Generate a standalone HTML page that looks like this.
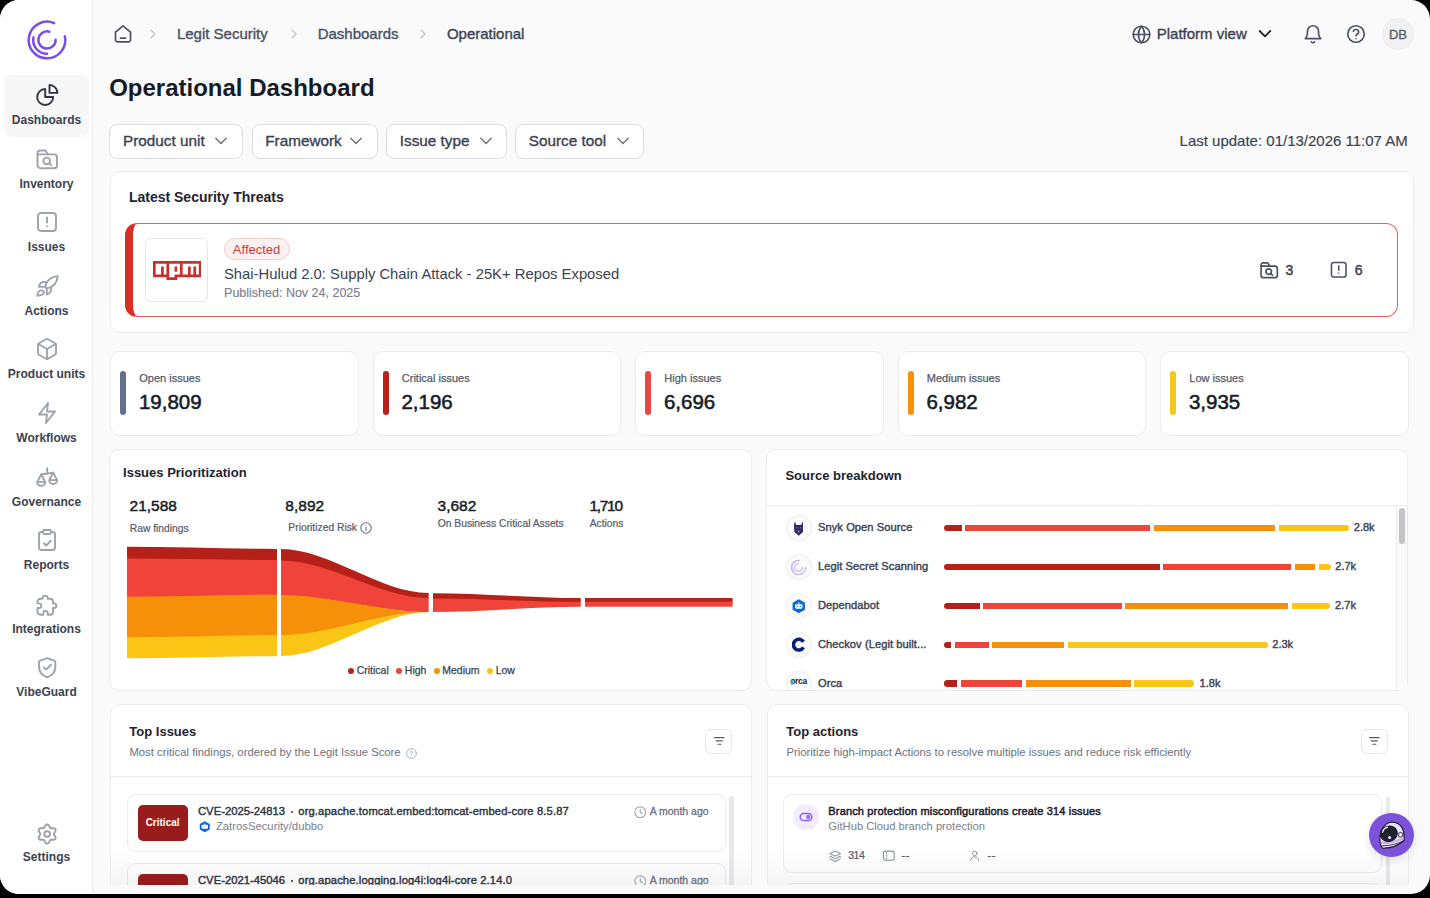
<!DOCTYPE html><html><head><meta charset="utf-8"><style>
*{box-sizing:border-box;margin:0;padding:0}
html,body{width:1430px;height:898px;overflow:hidden;background:#000;font-family:"Liberation Sans",sans-serif;color:#1f2330}
#app{position:absolute;left:0;top:0;width:1430px;height:894px;background:#fafafa;border-radius:19px;overflow:hidden}
.ab{position:absolute}
.t{position:absolute;white-space:nowrap;line-height:1}
.card{position:absolute;background:#fff;border:1px solid #ececef;border-radius:10px}
</style></head><body><div id="app">
<div class="ab" style="left:0.00px;top:0.00px;width:93.00px;height:894.00px;background:#fff;border-right:1px solid #ededf0"></div>
<svg class="ab" style="left:24.70px;top:17.50px" width="44" height="44" viewBox="-22 -22 44 44" fill="none" stroke="#7a4fe8" stroke-width="2.5" stroke-linecap="round" stroke-linejoin="round"><path d="M7.15 -16.85A18.3 18.3 0 1 0 17.90 -3.80"/><path d="M-13.55 -2.63A13.8 13.8 0 0 0 0.00 13.80"/><path d="M2.37 -8.27A8.6 8.6 0 1 0 8.59 -0.30"/></svg>
<div class="ab" style="left:4.00px;top:75.30px;width:85.00px;height:61.70px;background:#f7f7f8;border-radius:8px"></div>
<svg class="ab" style="left:34.50px;top:83.00px" width="24" height="24" viewBox="0 0 24 24" fill="none" stroke="#2f3542" stroke-width="1.9" stroke-linecap="round" stroke-linejoin="round"><path d="M10.2 6A8 8 0 1 0 18.2 14H10.2Z"/><path d="M14.5 2A7.9 7.9 0 0 1 22.4 9.9H14.5Z"/></svg>
<div class="t" style="left:-253.50px;width:600px;text-align:center;top:114.04px;font-size:12px;font-weight:bold;color:#3b4252;">Dashboards</div>
<svg class="ab" style="left:34.50px;top:146.60px" width="24" height="24" viewBox="0 0 24 24" fill="none" stroke="#9da2ac" stroke-width="1.9" stroke-linecap="round" stroke-linejoin="round"><path d="M2.5 7.35V6A2.5 2.5 0 0 1 5 3.5H10.5L12.9 7.35H19A3 3 0 0 1 22 10.35V18.2A3 3 0 0 1 19 21.2H5.5A3 3 0 0 1 2.5 18.2Z"/><path d="M2.5 7.35H12.9"/><circle cx="11.7" cy="13.9" r="3.3"/><path d="M14.2 16.3l2 1.8"/></svg>
<div class="t" style="left:-253.50px;width:600px;text-align:center;top:177.64px;font-size:12px;font-weight:bold;color:#3b4252;">Inventory</div>
<svg class="ab" style="left:34.50px;top:210.20px" width="24" height="24" viewBox="0 0 24 24" fill="none" stroke="#9da2ac" stroke-width="1.9" stroke-linecap="round" stroke-linejoin="round"><rect x="3" y="3" width="18" height="18" rx="3"/><path d="M12 7.5v5"/><path d="M12 16.2h.01"/></svg>
<div class="t" style="left:-253.50px;width:600px;text-align:center;top:241.24px;font-size:12px;font-weight:bold;color:#3b4252;">Issues</div>
<svg class="ab" style="left:34.50px;top:273.80px" width="24" height="24" viewBox="0 0 24 24" fill="none" stroke="#9da2ac" stroke-width="1.9" stroke-linecap="round" stroke-linejoin="round"><path d="M11 14.2C9.3 9.5 14.5 2.6 22.6 2.1 22.4 9.8 16 14.6 11 14.2Z"/><path d="M10.6 8.2C7 7.3 4.6 9.2 3.9 12.7H9.4"/><path d="M15.9 12.9C16.9 16.6 15 19.9 11.8 20.6V15.2"/><path d="M2.3 21.8C2.5 18.6 4 16.6 6.4 16.4A2.2 2.2 0 0 1 8.9 18.6C8.4 20.6 5.6 21.7 2.3 21.8Z"/></svg>
<div class="t" style="left:-253.50px;width:600px;text-align:center;top:304.84px;font-size:12px;font-weight:bold;color:#3b4252;">Actions</div>
<svg class="ab" style="left:34.50px;top:337.40px" width="24" height="24" viewBox="0 0 24 24" fill="none" stroke="#9da2ac" stroke-width="1.9" stroke-linecap="round" stroke-linejoin="round"><path d="M21 8a2 2 0 0 0-1-1.73l-7-4a2 2 0 0 0-2 0l-7 4A2 2 0 0 0 3 8v8a2 2 0 0 0 1 1.73l7 4a2 2 0 0 0 2 0l7-4A2 2 0 0 0 21 16Z"/><path d="m3.3 7 8.7 5 8.7-5"/><path d="M12 22V12"/></svg>
<div class="t" style="left:-253.50px;width:600px;text-align:center;top:368.44px;font-size:12px;font-weight:bold;color:#3b4252;">Product units</div>
<svg class="ab" style="left:34.50px;top:401.00px" width="24" height="24" viewBox="0 0 24 24" fill="none" stroke="#9da2ac" stroke-width="1.9" stroke-linecap="round" stroke-linejoin="round"><path d="M13 2 4 13.5h8L11 22l9-11.5h-8Z"/></svg>
<div class="t" style="left:-253.50px;width:600px;text-align:center;top:432.04px;font-size:12px;font-weight:bold;color:#3b4252;">Workflows</div>
<svg class="ab" style="left:34.50px;top:464.60px" width="24" height="24" viewBox="0 0 24 24" fill="none" stroke="#9da2ac" stroke-width="1.9" stroke-linecap="round" stroke-linejoin="round"><path d="M12.2 3.3V8.6"/><path d="M6.2 9.5 18.2 7.7"/><path d="M2.2 16.9 6.2 9.5 10.2 16.9A4 4 0 0 1 2.2 16.9ZM2.2 16.9H10.2"/><path d="M14.2 15.1 18.2 7.7 22.2 15.1A4 4 0 0 1 14.2 15.1ZM14.2 15.1H22.2"/></svg>
<div class="t" style="left:-253.50px;width:600px;text-align:center;top:495.64px;font-size:12px;font-weight:bold;color:#3b4252;">Governance</div>
<svg class="ab" style="left:34.50px;top:528.20px" width="24" height="24" viewBox="0 0 24 24" fill="none" stroke="#9da2ac" stroke-width="1.9" stroke-linecap="round" stroke-linejoin="round"><path d="M16 4h1.5A2.5 2.5 0 0 1 20 6.5v13a2.5 2.5 0 0 1-2.5 2.5h-11A2.5 2.5 0 0 1 4 19.5v-13A2.5 2.5 0 0 1 6.5 4H8"/><rect x="8" y="2" width="8" height="4" rx="1.5"/><path d="M8.9 15.3 11.2 17.5 16 12.7"/></svg>
<div class="t" style="left:-253.50px;width:600px;text-align:center;top:559.24px;font-size:12px;font-weight:bold;color:#3b4252;">Reports</div>
<svg class="ab" style="left:34.50px;top:591.80px" width="24" height="24" viewBox="0 0 24 24" fill="none" stroke="#9da2ac" stroke-width="1.9" stroke-linecap="round" stroke-linejoin="round"><path d="M5.5 6.7H7.6V6.2A2.55 2.55 0 0 1 12.7 6.2V6.7H15A3 3 0 0 1 18 9.7V11.4H19A2.3 2.3 0 0 1 19 16H18V19.7A3 3 0 0 1 15 22.7H12.7V21.3A2.25 2.25 0 0 0 8.2 21.3V22.7H5.5A3 3 0 0 1 2.5 19.7V16H3.9A2.3 2.3 0 0 0 3.9 11.4H2.5V9.7A3 3 0 0 1 5.5 6.7Z"/></svg>
<div class="t" style="left:-253.50px;width:600px;text-align:center;top:622.84px;font-size:12px;font-weight:bold;color:#3b4252;">Integrations</div>
<svg class="ab" style="left:34.50px;top:655.40px" width="24" height="24" viewBox="0 0 24 24" fill="none" stroke="#9da2ac" stroke-width="1.9" stroke-linecap="round" stroke-linejoin="round"><path d="M12.2 3.2 4.6 5.8A.8.8 0 0 0 4.1 6.6V12.5C4.1 17.3 7.6 20.5 12.2 22.4 16.8 20.5 20.3 17.3 20.3 12.5V6.6A.8.8 0 0 0 19.8 5.8Z"/><path d="M8.9 12.4 11 14.6 16 9.7"/></svg>
<div class="t" style="left:-253.50px;width:600px;text-align:center;top:686.44px;font-size:12px;font-weight:bold;color:#3b4252;">VibeGuard</div>
<svg class="ab" style="left:34.50px;top:822.00px" width="24" height="24" viewBox="0 0 24 24" fill="none" stroke="#9da2ac" stroke-width="1.9" stroke-linecap="round" stroke-linejoin="round"><path d="M18.90 12.00 L18.99 12.45 L19.25 12.94 L19.62 13.50 L20.02 14.12 L20.37 14.81 L20.59 15.52 L20.61 16.20 L20.41 16.80 L19.99 17.27 L19.39 17.59 L18.67 17.76 L17.90 17.80 L17.15 17.76 L16.49 17.72 L15.94 17.74 L15.50 17.89 L15.15 18.19 L14.86 18.66 L14.56 19.26 L14.22 19.92 L13.80 20.57 L13.30 21.11 L12.72 21.47 L12.10 21.60 L11.48 21.47 L10.90 21.11 L10.40 20.57 L9.98 19.92 L9.64 19.26 L9.34 18.66 L9.05 18.19 L8.70 17.89 L8.26 17.74 L7.71 17.72 L7.05 17.76 L6.30 17.80 L5.53 17.76 L4.81 17.59 L4.21 17.27 L3.79 16.80 L3.59 16.20 L3.61 15.52 L3.83 14.81 L4.18 14.12 L4.58 13.50 L4.95 12.94 L5.21 12.45 L5.30 12.00 L5.21 11.55 L4.95 11.06 L4.58 10.50 L4.18 9.88 L3.83 9.19 L3.61 8.48 L3.59 7.80 L3.79 7.20 L4.21 6.73 L4.81 6.41 L5.53 6.24 L6.30 6.20 L7.05 6.24 L7.71 6.28 L8.26 6.26 L8.70 6.11 L9.05 5.81 L9.34 5.34 L9.64 4.74 L9.98 4.08 L10.40 3.43 L10.90 2.89 L11.48 2.53 L12.10 2.40 L12.72 2.53 L13.30 2.89 L13.80 3.43 L14.22 4.08 L14.56 4.74 L14.86 5.34 L15.15 5.81 L15.50 6.11 L15.94 6.26 L16.49 6.28 L17.15 6.24 L17.90 6.20 L18.67 6.24 L19.39 6.41 L19.99 6.73 L20.41 7.20 L20.61 7.80 L20.59 8.48 L20.37 9.19 L20.02 9.88 L19.62 10.50 L19.25 11.06 L18.99 11.55Z"/><circle cx="12.1" cy="12" r="2.8"/></svg>
<div class="t" style="left:-253.50px;width:600px;text-align:center;top:851.44px;font-size:12px;font-weight:bold;color:#3b4252;">Settings</div>
<svg class="ab" style="left:113.00px;top:24.00px" width="20" height="19" viewBox="0 0 20 19" fill="none" stroke="#4a5162" stroke-width="1.7" stroke-linecap="round" stroke-linejoin="round"><path d="M2.5 8.2 10 1.8l7.5 6.4V16a1.8 1.8 0 0 1-1.8 1.8H4.3A1.8 1.8 0 0 1 2.5 16Z"/><path d="M7.5 14.2h5"/></svg>
<svg class="ab" style="left:149.30px;top:29.00px" width="8" height="10" viewBox="0 0 8 10" fill="none" stroke="#c4c7ce" stroke-width="1.3" stroke-linecap="round" stroke-linejoin="round"><path d="M2 1l4 4-4 4"/></svg>
<svg class="ab" style="left:289.70px;top:29.00px" width="8" height="10" viewBox="0 0 8 10" fill="none" stroke="#c4c7ce" stroke-width="1.3" stroke-linecap="round" stroke-linejoin="round"><path d="M2 1l4 4-4 4"/></svg>
<svg class="ab" style="left:419.00px;top:29.00px" width="8" height="10" viewBox="0 0 8 10" fill="none" stroke="#c4c7ce" stroke-width="1.3" stroke-linecap="round" stroke-linejoin="round"><path d="M2 1l4 4-4 4"/></svg>
<div class="t" style="left:176.88px;top:26.20px;font-size:15px;-webkit-text-stroke:0.35px #4a5162;color:#4a5162;">Legit Security</div>
<div class="t" style="left:317.68px;top:26.20px;font-size:15px;-webkit-text-stroke:0.35px #4a5162;color:#4a5162;">Dashboards</div>
<div class="t" style="left:446.88px;top:26.20px;font-size:15px;-webkit-text-stroke:0.35px #3b4252;color:#3b4252;">Operational</div>
<svg class="ab" style="left:1130.50px;top:23.50px" width="21" height="21" viewBox="0 0 24 24" fill="none" stroke="#4a5162" stroke-width="1.8" stroke-linecap="round" stroke-linejoin="round"><circle cx="12" cy="12" r="9.5"/><path d="M2.5 12h19"/><path d="M12 2.5a14.5 14.5 0 0 1 0 19 14.5 14.5 0 0 1 0-19Z"/></svg>
<div class="t" style="left:1156.77px;top:26.40px;font-size:15px;-webkit-text-stroke:0.35px #3b4252;color:#3b4252;">Platform view</div>
<svg class="ab" style="left:1257.00px;top:26.00px" width="16" height="16" viewBox="0 0 16 16" fill="none" stroke="#1f2330" stroke-width="1.8" stroke-linecap="round" stroke-linejoin="round"><path d="M2.7 5l5.3 5.3L13.3 5"/></svg>
<svg class="ab" style="left:1301.80px;top:23.00px" width="22" height="22" viewBox="0 0 24 24" fill="none" stroke="#4a5162" stroke-width="1.8" stroke-linecap="round" stroke-linejoin="round"><path d="M6 9a6 6 0 0 1 12 0c0 6 2.5 8 2.5 8h-17S6 15 6 9Z"/><path d="M10.3 20.5a1.9 1.9 0 0 0 3.4 0"/></svg>
<svg class="ab" style="left:1345.30px;top:22.70px" width="22" height="22" viewBox="0 0 24 24" fill="none" stroke="#4a5162" stroke-width="1.8" stroke-linecap="round" stroke-linejoin="round"><circle cx="12" cy="12" r="9"/><path d="M9.1 9a3 3 0 0 1 5.8 1c0 2-3 2.5-3 4"/><path d="M12 17.2h.01"/></svg>
<div class="ab" style="left:1382.20px;top:18.10px;width:31.50px;height:31.50px;border-radius:50%;background:#f2f2f4;border:1px solid #ececef"></div>
<div class="t" style="left:1098.00px;width:600px;text-align:center;top:27.70px;font-size:13px;-webkit-text-stroke:0.3px #555b69;color:#555b69;">DB</div>
<div class="t" style="left:109.16px;top:75.88px;font-size:24px;font-weight:bold;color:#161b26;">Operational Dashboard</div>
<div class="ab" style="left:109.30px;top:123.50px;width:133.40px;height:35.20px;background:#fff;border:1px solid #dcdde2;border-radius:8px"></div>
<div class="t" style="left:123.06px;top:132.85px;font-size:15.3px;-webkit-text-stroke:0.35px #3b4252;color:#3b4252;">Product unit</div>
<svg class="ab" style="left:215.20px;top:133.50px" width="12" height="12" viewBox="0 0 12 12" fill="none" stroke="#6b7180" stroke-width="1.4" stroke-linecap="round" stroke-linejoin="round"><path d="M0.8 4.2l5.2 5.2 5.2-5.2"/></svg>
<div class="ab" style="left:251.50px;top:123.50px;width:126.10px;height:35.20px;background:#fff;border:1px solid #dcdde2;border-radius:8px"></div>
<div class="t" style="left:265.26px;top:132.85px;font-size:15.3px;-webkit-text-stroke:0.35px #3b4252;color:#3b4252;">Framework</div>
<svg class="ab" style="left:350.10px;top:133.50px" width="12" height="12" viewBox="0 0 12 12" fill="none" stroke="#6b7180" stroke-width="1.4" stroke-linecap="round" stroke-linejoin="round"><path d="M0.8 4.2l5.2 5.2 5.2-5.2"/></svg>
<div class="ab" style="left:386.00px;top:123.50px;width:121.00px;height:35.20px;background:#fff;border:1px solid #dcdde2;border-radius:8px"></div>
<div class="t" style="left:399.76px;top:132.85px;font-size:15.3px;-webkit-text-stroke:0.35px #3b4252;color:#3b4252;">Issue type</div>
<svg class="ab" style="left:479.50px;top:133.50px" width="12" height="12" viewBox="0 0 12 12" fill="none" stroke="#6b7180" stroke-width="1.4" stroke-linecap="round" stroke-linejoin="round"><path d="M0.8 4.2l5.2 5.2 5.2-5.2"/></svg>
<div class="ab" style="left:515.00px;top:123.50px;width:129.00px;height:35.20px;background:#fff;border:1px solid #dcdde2;border-radius:8px"></div>
<div class="t" style="left:528.76px;top:132.85px;font-size:15.3px;-webkit-text-stroke:0.35px #3b4252;color:#3b4252;">Source tool</div>
<svg class="ab" style="left:616.50px;top:133.50px" width="12" height="12" viewBox="0 0 12 12" fill="none" stroke="#6b7180" stroke-width="1.4" stroke-linecap="round" stroke-linejoin="round"><path d="M0.8 4.2l5.2 5.2 5.2-5.2"/></svg>
<div class="t" style="right:22.20px;top:133.30px;font-size:15px;-webkit-text-stroke:0.15px #3b4252;color:#3b4252;">Last update: 01/13/2026 11:07 AM</div>
<div class="card" style="left:110px;top:171px;width:1303.5px;height:162px"></div>
<div class="t" style="left:128.91px;top:190.15px;font-size:14px;font-weight:bold;color:#1f2330;">Latest Security Threats</div>
<div class="ab" style="left:125.20px;top:222.50px;width:1272.50px;height:94.50px;border:1.4px solid #e55f5f;border-left:8.2px solid #d92d25;border-radius:12px;background:#fff"></div>
<div class="ab" style="left:145.20px;top:238.30px;width:63.30px;height:63.40px;border:1px solid #e6e7ea;border-radius:6px"></div>
<svg class="ab" style="left:152.90px;top:260.80px" width="48.5" height="19" viewBox="0 0 18 7" preserveAspectRatio="none"><path fill="#c9302c" d="M0 0h18v6H9v1H5V6H0Z"/><path fill="#fff" d="M1 5h2V2h1v3h1V1H1Z M6 1v5h2V5h2V1Z M8 2h1v2H8Z M11 1v4h2V2h1v3h1V2h1v3h1V1Z"/></svg>
<div class="ab" style="left:224.30px;top:238.30px;width:65.70px;height:21.40px;border:1px solid #f7caca;background:#fdf0f0;border-radius:11px"></div>
<div class="t" style="left:232.84px;top:242.80px;font-size:13px;color:#cf3a3a;">Affected</div>
<div class="t" style="left:223.98px;top:266.67px;font-size:14.8px;color:#3b4252;">Shai-Hulud 2.0: Supply Chain Attack - 25K+ Repos Exposed</div>
<div class="t" style="left:224.06px;top:287.22px;font-size:12.5px;-webkit-text-stroke:0.15px #7a8090;color:#7a8090;">Published: Nov 24, 2025</div>
<svg class="ab" style="left:1258.70px;top:260.00px" width="20" height="20" viewBox="0 0 24 24" fill="none" stroke="#4a5162" stroke-width="2" stroke-linecap="round" stroke-linejoin="round"><path d="M2.5 7.35V6A2.5 2.5 0 0 1 5 3.5H10.5L12.9 7.35H19A3 3 0 0 1 22 10.35V18.2A3 3 0 0 1 19 21.2H5.5A3 3 0 0 1 2.5 18.2Z"/><path d="M2.5 7.35H12.9"/><circle cx="11.7" cy="13.9" r="3.3"/><path d="M14.2 16.3l2 1.8"/></svg>
<div class="t" style="left:1285.41px;top:262.95px;font-size:14px;-webkit-text-stroke:0.45px #3b4252;color:#3b4252;">3</div>
<svg class="ab" style="left:1329.00px;top:260.00px" width="19.5" height="19.5" viewBox="0 0 24 24" fill="none" stroke="#4a5162" stroke-width="1.9" stroke-linecap="round" stroke-linejoin="round"><rect x="3" y="3" width="18" height="18" rx="3"/><path d="M12 7.5v5"/><path d="M12 16.2h.01"/></svg>
<div class="t" style="left:1354.81px;top:262.95px;font-size:14px;-webkit-text-stroke:0.45px #3b4252;color:#3b4252;">6</div>
<div class="card" style="left:110.0px;top:351.4px;width:248.8px;height:84.2px"></div>
<div class="ab" style="left:120.00px;top:371.00px;width:6.00px;height:44.40px;background:#64708a;border-radius:3px"></div>
<div class="t" style="left:139.31px;top:373.49px;font-size:11px;-webkit-text-stroke:0.25px #555b69;color:#555b69;">Open issues</div>
<div class="t" style="left:138.98px;top:392.45px;font-size:20.5px;-webkit-text-stroke:0.55px #161b26;color:#161b26;">19,809</div>
<div class="card" style="left:372.5px;top:351.4px;width:248.8px;height:84.2px"></div>
<div class="ab" style="left:382.50px;top:371.00px;width:6.00px;height:44.40px;background:#b9201a;border-radius:3px"></div>
<div class="t" style="left:401.81px;top:373.49px;font-size:11px;-webkit-text-stroke:0.25px #555b69;color:#555b69;">Critical issues</div>
<div class="t" style="left:401.48px;top:392.45px;font-size:20.5px;-webkit-text-stroke:0.55px #161b26;color:#161b26;">2,196</div>
<div class="card" style="left:635.0px;top:351.4px;width:248.8px;height:84.2px"></div>
<div class="ab" style="left:645.00px;top:371.00px;width:6.00px;height:44.40px;background:#ef4444;border-radius:3px"></div>
<div class="t" style="left:664.32px;top:373.49px;font-size:11px;-webkit-text-stroke:0.25px #555b69;color:#555b69;">High issues</div>
<div class="t" style="left:663.98px;top:392.45px;font-size:20.5px;-webkit-text-stroke:0.55px #161b26;color:#161b26;">6,696</div>
<div class="card" style="left:897.5px;top:351.4px;width:248.8px;height:84.2px"></div>
<div class="ab" style="left:907.50px;top:371.00px;width:6.00px;height:44.40px;background:#f7900a;border-radius:3px"></div>
<div class="t" style="left:926.82px;top:373.49px;font-size:11px;-webkit-text-stroke:0.25px #555b69;color:#555b69;">Medium issues</div>
<div class="t" style="left:926.48px;top:392.45px;font-size:20.5px;-webkit-text-stroke:0.55px #161b26;color:#161b26;">6,982</div>
<div class="card" style="left:1160.0px;top:351.4px;width:248.8px;height:84.2px"></div>
<div class="ab" style="left:1170.00px;top:371.00px;width:6.00px;height:44.40px;background:#fac515;border-radius:3px"></div>
<div class="t" style="left:1189.32px;top:373.49px;font-size:11px;-webkit-text-stroke:0.25px #555b69;color:#555b69;">Low issues</div>
<div class="t" style="left:1188.98px;top:392.45px;font-size:20.5px;-webkit-text-stroke:0.55px #161b26;color:#161b26;">3,935</div>
<div class="card" style="left:109.4px;top:449.3px;width:643.1px;height:241.5px"></div>
<svg class="ab" style="left:0;top:0" width="760" height="700" viewBox="0 0 760 700"><path fill="#b52119" d="M127 546.7C176.50 546.7 227.50 548.9 277 548.9L277 560.9C227.50 560.9 176.50 559.4 127 559.4Z"/><path fill="#f0443a" d="M127 558.5C176.50 558.5 227.50 560 277 560L277 595.6C227.50 595.6 176.50 597.6999999999999 127 597.6999999999999Z"/><path fill="#f79009" d="M127 596.8C176.50 596.8 227.50 594.7 277 594.7L277 636.0C227.50 636.0 176.50 638.1 127 638.1Z"/><path fill="#fac515" d="M127 637.2C176.50 637.2 227.50 635.1 277 635.1L277 656.2C227.50 656.2 176.50 658.3 127 658.3Z"/><path fill="#b52119" d="M281 549C329.74 549 379.96 593 428.7 593L428.7 598.9C379.96 598.9 329.74 561.4 281 561.4Z"/><path fill="#f0443a" d="M281 560.5C329.74 560.5 379.96 598 428.7 598L428.7 612C379.96 612 329.74 595.9 281 595.9Z"/><path fill="#f79009" d="M281 595C329.74 595 379.96 612 428.7 612L428.7 612C379.96 612 329.74 635.9 281 635.9Z"/><path fill="#fac515" d="M281 635C329.74 635 379.96 612 428.7 612L428.7 612C379.96 612 329.74 656 281 656Z"/><path fill="#b52119" d="M433 593.3C481.74 593.3 531.96 598.1 580.7 598.1L580.7 602.6999999999999C531.96 602.6999999999999 481.74 599.3 433 599.3Z"/><path fill="#f0443a" d="M433 598.4C481.74 598.4 531.96 601.8 580.7 601.8L580.7 606.8C531.96 606.8 481.74 612 433 612Z"/><path fill="#f79009" d="M433 611.9C481.74 611.9 531.96 606.8 580.7 606.8L580.7 606.8C531.96 606.8 481.74 612 433 612Z"/><path fill="#b52119" d="M585 598.1C633.71 598.1 683.89 598.1 732.6 598.1L732.6 602.6999999999999C683.89 602.6999999999999 633.71 602.6999999999999 585 602.6999999999999Z"/><path fill="#f0443a" d="M585 601.8C633.71 601.8 683.89 601.8 732.6 601.8L732.6 606.8C683.89 606.8 633.71 606.8 585 606.8Z"/></svg>
<div class="t" style="left:123.05px;top:466.10px;font-size:13px;font-weight:bold;color:#1f2330;">Issues Prioritization</div>
<div class="t" style="left:129.56px;top:498.48px;font-size:15.5px;-webkit-text-stroke:0.45px #161b26;color:#161b26;">21,588</div>
<div class="t" style="left:129.74px;top:524.08px;font-size:10.3px;-webkit-text-stroke:0.2px #555b69;color:#555b69;">Raw findings</div>
<div class="t" style="left:285.36px;top:498.48px;font-size:15.5px;-webkit-text-stroke:0.45px #161b26;color:#161b26;">8,892</div>
<div class="t" style="left:288.34px;top:522.78px;font-size:10.3px;-webkit-text-stroke:0.2px #555b69;color:#555b69;">Prioritized Risk</div>
<div class="t" style="left:437.56px;top:498.48px;font-size:15.5px;-webkit-text-stroke:0.45px #161b26;color:#161b26;">3,682</div>
<div class="t" style="left:437.74px;top:519.18px;font-size:10.3px;-webkit-text-stroke:0.2px #555b69;color:#555b69;">On Business Critical Assets</div>
<div class="t" style="left:589.46px;top:498.48px;font-size:15.5px;-webkit-text-stroke:0.45px #161b26;color:#161b26;letter-spacing:-1.3px">1,710</div>
<div class="t" style="left:589.64px;top:519.18px;font-size:10.3px;-webkit-text-stroke:0.2px #555b69;color:#555b69;">Actions</div>
<svg class="ab" style="left:360.00px;top:522.30px" width="12" height="12" viewBox="0 0 12 12" fill="none" stroke="#6b7180" stroke-width="1.1" stroke-linecap="round" stroke-linejoin="round"><circle cx="6" cy="6" r="5.2"/><path d="M6 5.4v3"/><path d="M6 3.5h.01"/></svg>
<div class="ab" style="left:347.60px;top:667.60px;width:6.40px;height:6.40px;border-radius:50%;background:#b52119"></div>
<div class="t" style="left:356.63px;top:665.41px;font-size:10.5px;-webkit-text-stroke:0.25px #3b4252;color:#3b4252;">Critical</div>
<div class="ab" style="left:395.80px;top:667.60px;width:6.40px;height:6.40px;border-radius:50%;background:#f0443a"></div>
<div class="t" style="left:404.83px;top:665.41px;font-size:10.5px;-webkit-text-stroke:0.25px #3b4252;color:#3b4252;">High</div>
<div class="ab" style="left:434.00px;top:667.60px;width:6.40px;height:6.40px;border-radius:50%;background:#f79009"></div>
<div class="t" style="left:442.23px;top:665.41px;font-size:10.5px;-webkit-text-stroke:0.25px #3b4252;color:#3b4252;">Medium</div>
<div class="ab" style="left:487.10px;top:667.60px;width:6.40px;height:6.40px;border-radius:50%;background:#fac515"></div>
<div class="t" style="left:495.63px;top:665.41px;font-size:10.5px;-webkit-text-stroke:0.25px #3b4252;color:#3b4252;">Low</div>
<div class="card" style="left:766.2px;top:449.3px;width:641.6px;height:241.5px"></div>
<div class="t" style="left:785.44px;top:469.30px;font-size:13px;font-weight:bold;color:#1f2330;">Source breakdown</div>
<div class="ab" style="left:767.20px;top:505.00px;width:639.60px;height:1.00px;background:#ededf0"></div>
<div class="ab" style="left:1396.00px;top:506.00px;width:11.00px;height:184.00px;background:#fafafa;border-left:1px solid #ededf0"></div>
<div class="ab" style="left:1398.80px;top:508.00px;width:6.50px;height:36.40px;border-radius:4px;background:#c4c4c6"></div>
<div class="ab" style="left:767px;top:506px;width:629px;height:184px;overflow:hidden"><div class="ab" style="left:-767px;top:-506px;width:1430px;height:898px">
<div class="ab" style="left:785.90px;top:515.15px;width:25.70px;height:25.70px;border-radius:50%;border:1px solid #ececef;background:#fbfbfc"></div>
<div class="t" style="left:818.01px;top:522.20px;font-size:11.1px;-webkit-text-stroke:0.4px #3b4252;color:#3b4252;letter-spacing:0.08px">Snyk Open Source</div>
<div class="ab" style="left:944.00px;top:524.85px;width:18.00px;height:6.30px;background:#b52119;border-radius:3.2px 0 0 3.2px"></div>
<div class="ab" style="left:965.10px;top:524.85px;width:185.10px;height:6.30px;background:#f0443a;border-radius:0 0 0 0"></div>
<div class="ab" style="left:1153.60px;top:524.85px;width:121.90px;height:6.30px;background:#f79009;border-radius:0 0 0 0"></div>
<div class="ab" style="left:1278.90px;top:524.85px;width:70.20px;height:6.30px;background:#fac515;border-radius:0 3.2px 3.2px 0"></div>
<div class="t" style="left:1353.82px;top:522.29px;font-size:11px;-webkit-text-stroke:0.4px #3b4252;color:#3b4252;">2.8k</div>
<div class="ab" style="left:785.90px;top:554.05px;width:25.70px;height:25.70px;border-radius:50%;border:1px solid #ececef;background:#fbfbfc"></div>
<div class="t" style="left:818.01px;top:561.10px;font-size:11.1px;-webkit-text-stroke:0.4px #3b4252;color:#3b4252;letter-spacing:0.08px">Legit Secret Scanning</div>
<div class="ab" style="left:944.00px;top:563.75px;width:215.90px;height:6.30px;background:#b52119;border-radius:3.2px 0 0 3.2px"></div>
<div class="ab" style="left:1163.30px;top:563.75px;width:127.80px;height:6.30px;background:#f0443a;border-radius:0 0 0 0"></div>
<div class="ab" style="left:1294.80px;top:563.75px;width:20.50px;height:6.30px;background:#f79009;border-radius:0 0 0 0"></div>
<div class="ab" style="left:1318.70px;top:563.75px;width:11.90px;height:6.30px;background:#fac515;border-radius:0 3.2px 3.2px 0"></div>
<div class="t" style="left:1335.32px;top:561.19px;font-size:11px;-webkit-text-stroke:0.4px #3b4252;color:#3b4252;">2.7k</div>
<div class="ab" style="left:785.90px;top:592.95px;width:25.70px;height:25.70px;border-radius:50%;border:1px solid #ececef;background:#fbfbfc"></div>
<div class="t" style="left:818.01px;top:600.00px;font-size:11.1px;-webkit-text-stroke:0.4px #3b4252;color:#3b4252;letter-spacing:0.08px">Dependabot</div>
<div class="ab" style="left:944.00px;top:602.65px;width:35.60px;height:6.30px;background:#b52119;border-radius:3.2px 0 0 3.2px"></div>
<div class="ab" style="left:983.30px;top:602.65px;width:138.50px;height:6.30px;background:#f0443a;border-radius:0 0 0 0"></div>
<div class="ab" style="left:1125.20px;top:602.65px;width:162.80px;height:6.30px;background:#f79009;border-radius:0 0 0 0"></div>
<div class="ab" style="left:1291.70px;top:602.65px;width:38.60px;height:6.30px;background:#fac515;border-radius:0 3.2px 3.2px 0"></div>
<div class="t" style="left:1335.12px;top:600.09px;font-size:11px;-webkit-text-stroke:0.4px #3b4252;color:#3b4252;">2.7k</div>
<div class="ab" style="left:785.90px;top:631.85px;width:25.70px;height:25.70px;border-radius:50%;border:1px solid #ececef;background:#fbfbfc"></div>
<div class="t" style="left:818.01px;top:638.90px;font-size:11.1px;-webkit-text-stroke:0.4px #3b4252;color:#3b4252;letter-spacing:0.08px">Checkov (Legit built...</div>
<div class="ab" style="left:944.00px;top:641.55px;width:6.90px;height:6.30px;background:#b52119;border-radius:3.2px 0 0 3.2px"></div>
<div class="ab" style="left:954.60px;top:641.55px;width:34.40px;height:6.30px;background:#f0443a;border-radius:0 0 0 0"></div>
<div class="ab" style="left:992.40px;top:641.55px;width:71.60px;height:6.30px;background:#f79009;border-radius:0 0 0 0"></div>
<div class="ab" style="left:1067.70px;top:641.55px;width:199.90px;height:6.30px;background:#fac515;border-radius:0 3.2px 3.2px 0"></div>
<div class="t" style="left:1272.32px;top:638.99px;font-size:11px;-webkit-text-stroke:0.4px #3b4252;color:#3b4252;">2.3k</div>
<div class="ab" style="left:785.90px;top:670.75px;width:25.70px;height:25.70px;border-radius:50%;border:1px solid #ececef;background:#fbfbfc"></div>
<div class="t" style="left:818.01px;top:677.80px;font-size:11.1px;-webkit-text-stroke:0.4px #3b4252;color:#3b4252;letter-spacing:0.08px">Orca</div>
<div class="ab" style="left:944.00px;top:680.45px;width:12.90px;height:6.30px;background:#b52119;border-radius:3.2px 0 0 3.2px"></div>
<div class="ab" style="left:960.60px;top:680.45px;width:61.30px;height:6.30px;background:#f0443a;border-radius:0 0 0 0"></div>
<div class="ab" style="left:1025.60px;top:680.45px;width:105.00px;height:6.30px;background:#f79009;border-radius:0 0 0 0"></div>
<div class="ab" style="left:1134.00px;top:680.45px;width:60.30px;height:6.30px;background:#fac515;border-radius:0 3.2px 3.2px 0"></div>
<div class="t" style="left:1199.62px;top:677.89px;font-size:11px;-webkit-text-stroke:0.4px #3b4252;color:#3b4252;">1.8k</div>
<svg class="ab" style="left:793.50px;top:520.80px" width="9.5" height="15.2" viewBox="0 0 10 16"><path fill="#2b2a6e" d="M0.6 0.5 2.6 4.2h4.8L9.4 0.5 10 5.5 9.6 11.5 5 15.6 0.4 11.5 0 5.5Z"/><path fill="#c98a5a" d="M3 9.5 5 12.5 7 9.5 5 10.6Z"/><path fill="#7d7fb8" d="M2.4 6.6h1.6v1H2.4ZM6 6.6h1.6v1H6Z"/></svg>
<svg class="ab" style="left:789.40px;top:557.60px" width="19" height="19" viewBox="0 0 24 24" fill="none" stroke="#c9b4f5" stroke-width="1.6" stroke-linecap="round" stroke-linejoin="round"><path d="M13.5 3.1A9 9 0 1 0 21 11.5"/><path d="M12 7A5 5 0 1 0 17 12"/><path d="M6 17.5A8 8 0 0 1 9 4"/></svg>
<svg class="ab" style="left:791.80px;top:598.50px" width="13.6" height="14.5" viewBox="0 0 14 15"><path fill="#0969da" d="M7 0.3 13.4 3.9v7.2L7 14.7 0.6 11.1V3.9Z"/><rect x="3.2" y="5.4" width="7.6" height="4.6" rx="1.2" fill="#fff"/><rect x="6.4" y="3.6" width="1.2" height="1.8" fill="#fff"/><rect x="4.8" y="7" width="1.2" height="1.4" rx="0.5" fill="#0969da"/><rect x="8" y="7" width="1.2" height="1.4" rx="0.5" fill="#0969da"/></svg>
<svg class="ab" style="left:791.80px;top:637.00px" width="13.4" height="15.3" viewBox="0 0 14 16"><path fill="#0b1f7a" d="M13.6 4.2A7.5 7.5 0 1 0 13.6 11.8L10.4 10A3.8 3.8 0 1 1 10.4 6Z"/></svg>
<div class="t" style="left:790.20px;top:677.30px;font-size:8.5px;font-weight:bold;color:#1b1f2a;letter-spacing:-0.3px">orca</div>
<div class="ab" style="left:790.50px;top:680.00px;width:2.20px;height:4.50px;background:#3aa0ff;border-radius:1px"></div>
</div></div>
<div class="ab" style="left:93px;top:0;width:1337px;height:884.5px;overflow:hidden"><div class="ab" style="left:-93px;top:0;width:1430px;height:900px">
<div class="card" style="left:109.5px;top:704.4px;width:642.6px;height:260px"></div>
<div class="t" style="left:129.34px;top:725.20px;font-size:13px;font-weight:bold;color:#1f2330;">Top Issues</div>
<div class="t" style="left:129.40px;top:746.63px;font-size:11.3px;color:#6b7180;">Most critical findings, ordered by the Legit Issue Score</div>
<div class="ab" style="left:705.30px;top:728.50px;width:26.70px;height:25.00px;border:1px solid #e6e7ea;border-radius:6px;background:#fff"></div>
<svg class="ab" style="left:711.60px;top:734.00px" width="14" height="14" viewBox="0 0 14 14" fill="none" stroke="#555b69" stroke-width="1.1" stroke-linecap="round" stroke-linejoin="round"><path d="M2.6 3.6h9.4M4.2 6.9h6.2M5.8 10.2h3.1"/></svg>
<div class="ab" style="left:110.50px;top:776.30px;width:640.00px;height:1.00px;background:#ededf0"></div>
<div class="card" style="left:766.5px;top:704.4px;width:642.6px;height:260px"></div>
<div class="t" style="left:786.34px;top:725.20px;font-size:13px;font-weight:bold;color:#1f2330;">Top actions</div>
<div class="t" style="left:786.40px;top:746.63px;font-size:11.3px;color:#6b7180;">Prioritize high-impact Actions to resolve multiple issues and reduce risk efficiently</div>
<div class="ab" style="left:1361.00px;top:728.50px;width:26.70px;height:25.00px;border:1px solid #e6e7ea;border-radius:6px;background:#fff"></div>
<svg class="ab" style="left:1367.30px;top:734.00px" width="14" height="14" viewBox="0 0 14 14" fill="none" stroke="#555b69" stroke-width="1.1" stroke-linecap="round" stroke-linejoin="round"><path d="M2.6 3.6h9.4M4.2 6.9h6.2M5.8 10.2h3.1"/></svg>
<div class="ab" style="left:767.50px;top:776.30px;width:640.00px;height:1.00px;background:#ededf0"></div>
<svg class="ab" style="left:405.60px;top:747.60px" width="11" height="11" viewBox="0 0 12 12" fill="none" stroke="#a3a7b0" stroke-width="1" stroke-linecap="round" stroke-linejoin="round"><circle cx="6" cy="6" r="5.3"/><path d="M4.5 4.7a1.5 1.5 0 0 1 2.9.4c0 1-1.4 1.1-1.4 2"/><path d="M6 8.9h.01"/></svg>
<div class="ab" style="left:729.00px;top:796.30px;width:4.50px;height:100.00px;border-radius:3px;background:#e8e9ec"></div>
<div class="ab" style="left:1385.50px;top:796.30px;width:4.50px;height:100.00px;border-radius:3px;background:#e8e9ec"></div>
<div class="ab" style="left:126.70px;top:793.80px;width:599.50px;height:58.70px;border:1px solid #ececef;border-radius:9px;background:#fff"></div>
<div class="ab" style="left:137.60px;top:804.70px;width:50.30px;height:36.70px;border-radius:5px;background:#9a1b1c"></div>
<div class="t" style="left:145.65px;top:818.24px;font-size:10px;font-weight:bold;color:#fff;">Critical</div>
<div class="t" style="left:198.01px;top:806.08px;font-size:11.25px;-webkit-text-stroke:0.4px #2d3340;color:#2d3340;">CVE-2025-24813</div>
<div class="ab" style="left:290.80px;top:810.90px;width:2.20px;height:2.20px;border-radius:50%;background:#2d3340"></div>
<div class="t" style="left:298.31px;top:806.12px;font-size:11.2px;-webkit-text-stroke:0.4px #2d3340;color:#2d3340;letter-spacing:0.13px">org.apache.tomcat.embed:tomcat-embed-core 8.5.87</div>
<svg class="ab" style="left:633.80px;top:805.50px" width="12.5" height="12.5" viewBox="0 0 12 12" fill="none" stroke="#a3a7b0" stroke-width="1.1" stroke-linecap="round" stroke-linejoin="round"><circle cx="6" cy="6" r="5.2"/><path d="M6 3.2V6l1.8 1.2"/></svg>
<div class="t" style="left:649.63px;top:805.81px;font-size:10.5px;-webkit-text-stroke:0.3px #6b7180;color:#6b7180;">A month ago</div>
<div class="ab" style="left:126.70px;top:862.90px;width:599.50px;height:58.70px;border:1px solid #ececef;border-radius:9px;background:#fff"></div>
<div class="ab" style="left:137.60px;top:873.80px;width:50.30px;height:36.70px;border-radius:5px;background:#9a1b1c"></div>
<div class="t" style="left:198.01px;top:875.18px;font-size:11.25px;-webkit-text-stroke:0.4px #2d3340;color:#2d3340;">CVE-2021-45046</div>
<div class="ab" style="left:290.80px;top:880.00px;width:2.20px;height:2.20px;border-radius:50%;background:#2d3340"></div>
<div class="t" style="left:298.31px;top:875.22px;font-size:11.2px;-webkit-text-stroke:0.4px #2d3340;color:#2d3340;letter-spacing:0.13px">org.apache.logging.log4i:log4i-core 2.14.0</div>
<svg class="ab" style="left:633.80px;top:874.60px" width="12.5" height="12.5" viewBox="0 0 12 12" fill="none" stroke="#a3a7b0" stroke-width="1.1" stroke-linecap="round" stroke-linejoin="round"><circle cx="6" cy="6" r="5.2"/><path d="M6 3.2V6l1.8 1.2"/></svg>
<div class="t" style="left:649.63px;top:874.91px;font-size:10.5px;-webkit-text-stroke:0.3px #6b7180;color:#6b7180;">A month ago</div>
<svg class="ab" style="left:199.30px;top:821.30px" width="11.5" height="11.5" viewBox="0 0 12 12"><path fill="#0b63d6" d="M6 0.2 11.2 3.1v5.8L6 11.8 0.8 8.9V3.1Z"/><rect x="2.6" y="3.9" width="6.8" height="4.2" rx="1.1" fill="#fff"/><rect x="5.5" y="2.6" width="1" height="1.5" fill="#fff"/><rect x="4" y="5.5" width="1.3" height="1.2" rx="0.4" fill="#8fb8f0"/><rect x="6.7" y="5.5" width="1.3" height="1.2" rx="0.4" fill="#8fb8f0"/></svg>
<div class="t" style="left:215.90px;top:820.73px;font-size:11.3px;color:#7a8090;">ZatrosSecurity/dubbo</div>
<div class="ab" style="left:782.90px;top:793.60px;width:599.50px;height:79.60px;border:1px solid #ececef;border-radius:9px;background:#fff"></div>
<div class="ab" style="left:782.90px;top:883.00px;width:599.50px;height:79.60px;border:1px solid #ececef;border-radius:9px;background:#fff"></div>
<div class="ab" style="left:793.00px;top:803.70px;width:26.00px;height:26.00px;border-radius:50%;background:#f3ecfd"></div>
<svg class="ab" style="left:798.80px;top:812.00px" width="14" height="10" viewBox="0 0 14 10"><rect x="1.2" y="1.4" width="11.6" height="7.2" rx="3.6" fill="none" stroke="#8a5cf0" stroke-width="1.5"/><circle cx="9.2" cy="5" r="2.2" fill="#9b74f2"/></svg>
<div class="t" style="left:828.32px;top:806.39px;font-size:11px;-webkit-text-stroke:0.5px #1f2330;color:#1f2330;letter-spacing:0.16px">Branch protection misconfigurations create 314 issues</div>
<div class="t" style="left:828.31px;top:821.42px;font-size:11.2px;color:#7a8090;">GitHub Cloud branch protection</div>
<svg class="ab" style="left:829.00px;top:849.80px" width="12.5" height="12.5" viewBox="0 0 12 12" fill="none" stroke="#8a8f9a" stroke-width="1" stroke-linecap="round" stroke-linejoin="round"><path d="M6 1 11 3.5 6 6 1 3.5Z"/><path d="M1 6 6 8.5 11 6"/><path d="M1 8.5 6 11 11 8.5"/></svg>
<div class="t" style="left:848.13px;top:850.43px;font-size:10.6px;-webkit-text-stroke:0.2px #555b69;color:#555b69;letter-spacing:-0.5px">314</div>
<svg class="ab" style="left:882.00px;top:850.00px" width="13.5" height="11.5" viewBox="0 0 13 12" fill="none" stroke="#8a8f9a" stroke-width="1.1" stroke-linecap="round" stroke-linejoin="round"><rect x="1" y="1.2" width="11.2" height="9.4" rx="2.2"/><path d="M4.3 2.5v1.2M4.3 5.3v1.2M4.3 8.1v1.2"/></svg>
<div class="t" style="left:901.62px;top:849.69px;font-size:11px;-webkit-text-stroke:0.35px #555b69;color:#555b69;letter-spacing:0.6px">--</div>
<svg class="ab" style="left:968.50px;top:849.80px" width="11.5" height="11.5" viewBox="0 0 11 13" fill="none" stroke="#8a8f9a" stroke-width="1" stroke-linecap="round" stroke-linejoin="round"><circle cx="5.5" cy="3.8" r="2.6"/><path d="M1 12a4.5 4.5 0 0 1 9 0"/></svg>
<div class="t" style="left:987.62px;top:849.69px;font-size:11px;-webkit-text-stroke:0.35px #555b69;color:#555b69;letter-spacing:0.6px">--</div>
<div class="ab" style="left:111.00px;top:848.00px;width:640.00px;height:37.00px;background:linear-gradient(to bottom,rgba(30,30,50,0),rgba(30,30,50,0.045))"></div>
<div class="ab" style="left:767.50px;top:848.00px;width:640.00px;height:37.00px;background:linear-gradient(to bottom,rgba(30,30,50,0),rgba(30,30,50,0.045))"></div>
</div></div>
<div class="ab" style="left:1368.8px;top:812.5px;width:44.8px;height:44.8px;border-radius:50%;background:#7b52d9;box-shadow:0 4px 10px rgba(0,0,0,0.10)">
    <svg class="ab" style="left:0;top:0" width="45" height="45" viewBox="0 0 45 45">
      <path d="M11 28.5C9.8 18 15.5 9.3 23.5 9.3 30.5 9.3 35 15 35 22.5V27.5C29.5 32.5 21 35.3 13.5 35.2 11.8 33.6 11.2 31.5 11 28.5Z" fill="#ece2ff" stroke="#16161e" stroke-width="1.1" stroke-linejoin="round"/>
      <path d="M11.3 30C19 30.5 28 28.6 35 25.3" fill="none" stroke="#16161e" stroke-width="1"/>
      <path d="M12.2 32.8C20 33 28.5 31 35 27.8" fill="none" stroke="#16161e" stroke-width="0.8"/>
      <path d="M12 28.6C19.5 29 28 27.2 34.6 24.2L34.8 26.3C28.5 29.5 20 31.3 11.6 30.8Z" fill="#c9b2f5"/>
      <ellipse cx="19.8" cy="20.8" rx="8.6" ry="7.6" transform="rotate(-18 19.8 20.8)" fill="#1f2230" stroke="#16161e" stroke-width="1"/>
      <path d="M13.6 19.2A6.8 6.8 0 0 1 18.5 14.2" fill="none" stroke="#ffffff" stroke-width="1.3" stroke-linecap="round"/>
      <circle cx="20.6" cy="24.4" r="1.5" fill="#e8dcff"/>
      <circle cx="31.6" cy="21.8" r="2.3" fill="#ffffff" stroke="#16161e" stroke-width="0.9"/>
    </svg></div>
</div></body></html>
